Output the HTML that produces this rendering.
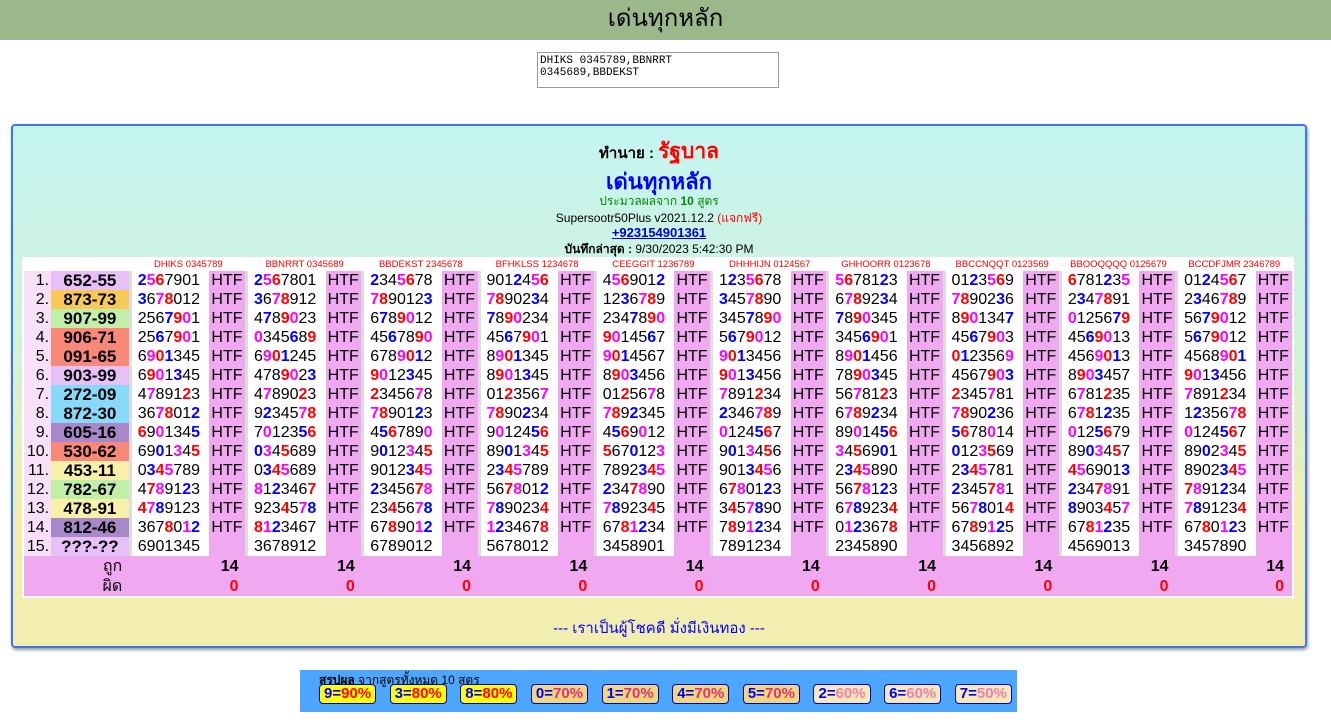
<!DOCTYPE html>
<html><head><meta charset="utf-8"><style>
body{margin:0;background:#fff;font-family:"Liberation Sans","Noto Sans CJK SC",sans-serif;width:1331px;height:728px;overflow:hidden;position:relative}
.top{height:40px;background:#9bb88a;text-align:center;font-size:24px;line-height:38px;color:#000}
textarea{position:absolute;left:537px;top:52px;width:236px;height:30px;font-family:"Liberation Mono",monospace;font-size:11px;border:1px solid #999;padding:2px;resize:none;overflow:hidden;line-height:12px}
.panel{position:absolute;left:11px;top:124px;width:1292px;height:520px;border:2px solid #3a78e8;border-radius:4px;background:linear-gradient(#c4f4f0,#d4f2d8 45%,#f2eeb0 75%,#f2eeb0);box-shadow:1px 2px 3px #999}
.hd{position:absolute;left:0;width:100%;text-align:center}
table{position:absolute;left:9px;top:131px;width:1272px;border-collapse:collapse;table-layout:fixed;background:#fff;border:2px solid #fff}
td{padding:0;height:19px;font-size:16px;line-height:19px;white-space:nowrap;overflow:hidden}
.ix{text-align:right;background:#f8e0f8;padding-right:2px}
.rs{text-align:center;font-weight:bold;font-size:17px;font-family:"Liberation Sans",sans-serif}
.nm{border-left:3px solid #ddd;padding-left:6px}
.ht{background:#f0a8f0;padding-left:2px}
.ch td{height:12px;font-size:9.5px;line-height:12px;color:#f00;text-align:center}
.r{color:#f00;font-weight:bold}.m{color:#f0f;font-weight:bold}.b{color:#00f;font-weight:bold}
.ft td{background:#f0a8f0;height:20px;font-weight:bold;text-align:right;font-size:16px;padding-right:8px}
.sum{position:absolute;left:300px;top:670px;width:717px;height:42px;background:#4da6ff}
.bt{display:inline-block;border:1px solid #00c;border-radius:4px;padding:0 4px;font-size:15px;line-height:18px;margin-right:13.5px;font-weight:bold;color:#00f}
</style></head><body>
<div class="top">เด่นทุกหลัก</div>
<textarea>DHIKS 0345789,BBNRRT 0345689,BBDEKST</textarea>
<div class="panel">
<div class="hd" style="top:9px;font-size:15px;font-weight:bold">ทำนาย : <span style="color:#f00;font-size:21px">รัฐบาล</span></div>
<div class="hd" style="top:38px;font-size:22px;font-weight:bold;color:#00f">เด่นทุกหลัก</div>
<div class="hd" style="top:66px;font-size:12px;color:#080">ประมวลผลจาก <b>10</b> สูตร</div>
<div class="hd" style="top:83px;font-size:12px">Supersootr50Plus v2021.12.2 <span style="color:#f00">(แจกฟรี)</span></div>
<div class="hd" style="top:99px;font-size:13px;font-weight:bold;color:#00c;text-decoration:underline">+923154901361</div>
<div class="hd" style="top:114px;font-size:12px"><b>บันทึกล่าสุด :</b> 9/30/2023 5:42:30 PM</div>
<table id="t"></table>
<div class="hd" style="top:490px;font-size:15px;color:#00f">--- เราเป็นผู้โชคดี มั่งมีเงินทอง ---</div>
</div>
<div class="sum">
<div style="position:absolute;left:19px;top:1px;font-size:12px"><b>สรุปผล</b> จากสูตรทั้งหมด 10 สตร</div>
<div style="position:absolute;left:19px;top:14px;white-space:nowrap">
<span class="bt" style="background:#ff0">9=<span style="color:#f00">90%</span></span><span class="bt" style="background:#ff0">3=<span style="color:#f00">80%</span></span><span class="bt" style="background:#ff0">8=<span style="color:#f00">80%</span></span><span class="bt" style="background:#f0d878">0=<span style="color:#e03080">70%</span></span><span class="bt" style="background:#f0d878">1=<span style="color:#e03080">70%</span></span><span class="bt" style="background:#f0d878">4=<span style="color:#e03080">70%</span></span><span class="bt" style="background:#f0d878">5=<span style="color:#e03080">70%</span></span><span class="bt" style="background:#f8eab8">2=<span style="color:#f080b0">60%</span></span><span class="bt" style="background:#f8eab8">6=<span style="color:#f080b0">60%</span></span><span class="bt" style="background:#f8eab8">7=<span style="color:#f080b0">50%</span></span>
</div></div>
<script>
var H=["DHIKS 0345789","BBNRRT 0345689","BBDEKST 2345678","BFHKLSS 1234678","CEEGGIT 1236789","DHHHIJN 0124567","GHHOORR 0123678","BBCCNQQT 0123569","BBOOQQQQ 0125679","BCCDFJMR 2346789"];
var R=["652-55","873-73","907-99","906-71","091-65","903-99","272-09","872-30","605-16","530-62","453-11","782-67","478-91","812-46","???-??"];
var C=["#e8c0f8","#f8c858","#c0f0a8","#f88878","#f88878","#e8c0f8","#88d8f8","#88d8f8","#a888c8","#f88878","#f8f0a8","#c0f0a8","#f8f0a8","#a888c8","#e8c0f8"];
var D=`2567901,2567801,2345678,9012456,4569012,1235678,5678123,0123569,6781235,0124567
3678012,3678912,7890123,7890234,1236789,3457890,6789234,7890236,2347891,2346789
2567901,4789023,6789012,7890234,2347890,3457890,7890345,8901347,0125679,5679012
2567901,0345689,4567890,4567901,9014567,5679012,3456901,4567903,4569013,5679012
6901345,6901245,6789012,8901345,9014567,9013456,8901456,0123569,4569013,4568901
6901345,4789023,9012345,8901345,8903456,9013456,7890345,4567903,8903457,9013456
4789123,4789023,2345678,0123567,0125678,7891234,5678123,2345781,6781235,7891234
3678012,9234578,7890123,7890234,7892345,2346789,6789234,7890236,6781235,1235678
6901345,7012356,4567890,9012456,4569012,0124567,8901456,5678014,0125679,0124567
6901345,0345689,9012345,8901345,5670123,9013456,3456901,0123569,8903457,8902345
0345789,0345689,9012345,2345789,7892345,9013456,2345890,2345781,4569013,8902345
4789123,8123467,2345678,5678012,2347890,6780123,5678123,2345781,2347891,7891234
4789123,9234578,2345678,7890234,7892345,3457890,6789234,5678014,8903457,7891234
3678012,8123467,6789012,1234678,6781234,7891234,0123678,6789125,6781235,6780123
6901345,3678912,6789012,5678012,3458901,7891234,2345890,3456892,4569013,3457890`.split("\n").map(s=>s.split(","));
var h='<colgroup><col style="width:28px"><col style="width:79px">';
for(var i=0;i<10;i++)h+='<col style="width:79px"><col style="width:37px">';
h+='</colgroup><tr class="ch"><td></td><td></td>';
for(i=0;i<10;i++)h+='<td colspan=2>'+H[i]+'</td>';
h+='</tr>';
for(var r=0;r<15;r++){
 h+='<tr><td class="ix">'+(r+1)+'.</td><td class="rs" style="background:'+C[r]+'">'+R[r]+'</td>';
 var d=R[r];
 for(i=0;i<10;i++){
  var s='';
  for(var c of D[r][i]){
   var cl='';
   if(r<14){if(c==d[0])cl='r';else if(c==d[1])cl='m';else if(c==d[2])cl='b';}
   s+=cl?'<span class="'+cl+'">'+c+'</span>':c;
  }
  h+='<td class="nm">'+s+'</td><td class="ht">'+(r<14?'HTF':'')+'</td>';
 }
 h+='</tr>';
}
h+='<tr class="ft"><td></td><td style="font-weight:normal">ถูก</td>';
for(i=0;i<10;i++)h+='<td colspan=2>14</td>';
h+='</tr><tr class="ft"><td></td><td style="font-weight:normal">ผิด</td>';
for(i=0;i<10;i++)h+='<td colspan=2 style="color:#f00">0</td>';
h+='</tr>';
document.getElementById('t').innerHTML=h;
</script>
</body></html>
